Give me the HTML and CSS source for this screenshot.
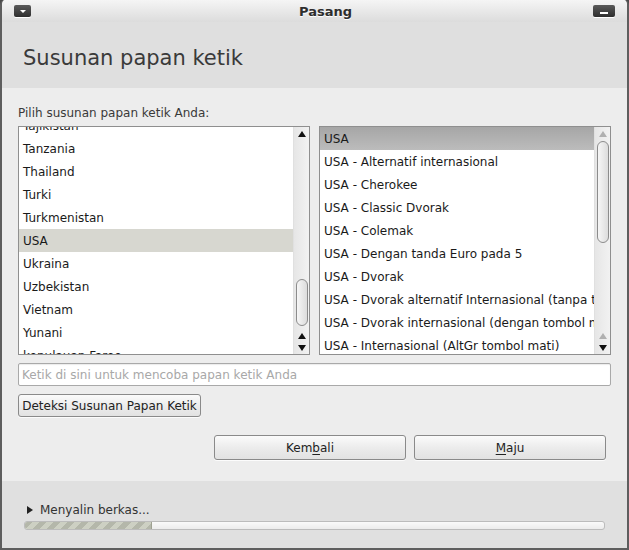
FILE: index.html
```html
<!DOCTYPE html>
<html lang="id">
<head>
<meta charset="utf-8">
<title>Pasang</title>
<link rel="stylesheet" href="styles.css">
</head>
<body>
<div class="window">
  <div class="titlebar">
    <span class="wbtn wbtn-menu"><span class="tri-down-white"></span></span>
    <span class="wtitle">Pasang</span>
    <span class="wbtn wbtn-min"><span class="minbar"></span></span>
  </div>
  <div class="header">
    <h1 class="page-title">Susunan papan ketik</h1>
  </div>
  <div class="content">
    <div class="label">Pilih susunan papan ketik Anda:</div>
    <div class="lists">
      <div class="listbox">
        <div class="rows rows-scrolled">
          <div class="row">Tajikistan</div>
          <div class="row">Tanzania</div>
          <div class="row">Thailand</div>
          <div class="row">Turki</div>
          <div class="row">Turkmenistan</div>
          <div class="row row-sel-light">USA</div>
          <div class="row">Ukraina</div>
          <div class="row">Uzbekistan</div>
          <div class="row">Vietnam</div>
          <div class="row">Yunani</div>
          <div class="row">kepulauan Faroe</div>
        </div>
        <div class="scrollbar">
          <div class="arrow"><span class="tri-up"></span></div>
          <div class="thumb thumb-left"></div>
          <div class="spacer"></div>
          <div class="arrow"><span class="tri-up"></span></div>
          <div class="arrow"><span class="tri-down"></span></div>
        </div>
      </div>
      <div class="listbox">
        <div class="rows">
          <div class="row row-sel-dark">USA</div>
          <div class="row">USA - Alternatif internasional</div>
          <div class="row">USA - Cherokee</div>
          <div class="row">USA - Classic Dvorak</div>
          <div class="row">USA - Colemak</div>
          <div class="row">USA - Dengan tanda Euro pada 5</div>
          <div class="row">USA - Dvorak</div>
          <div class="row">USA - Dvorak alternatif Internasional (tanpa tombol mati)</div>
          <div class="row">USA - Dvorak internasional (dengan tombol mati)</div>
          <div class="row">USA - Internasional (AltGr tombol mati)</div>
        </div>
        <div class="scrollbar">
          <div class="arrow"><span class="tri-up tri-dim"></span></div>
          <div class="thumb thumb-right"></div>
          <div class="spacer"></div>
          <div class="arrow"><span class="tri-up tri-dim"></span></div>
          <div class="arrow"><span class="tri-down"></span></div>
        </div>
      </div>
    </div>
    <div class="entry">Ketik di sini untuk mencoba papan ketik Anda</div>
    <div class="detect-row"><span class="btn btn-detect">Deteksi Susunan Papan Ketik</span></div>
    <div class="nav">
      <span class="btn btn-nav">Kem<u>b</u>ali</span>
      <span class="btn btn-nav"><u>M</u>aju</span>
    </div>
  </div>
  <div class="footer">
    <div class="expander"><span class="tri-right"></span><span>Menyalin berkas...</span></div>
    <div class="progress"><div class="progress-fill" style="width:22%"></div></div>
  </div>
</div>
</body>
</html>
```

FILE: styles.css
```css
* { box-sizing: border-box; }
html, body { margin: 0; padding: 0; }
body {
  width: 629px;
  height: 550px;
  overflow: hidden;
  background: #4a4a4a;
  font-family: "DejaVu Sans", "Liberation Sans", sans-serif;
  font-size: 12px;
  color: #1c1c1c;
}
.window {
  width: 629px;
  height: 550px;
  border-left: 2px solid #5e5e5e;
  border-right: 2px solid #5e5e5e;
  border-bottom: 2px solid #5e5e5e;
  border-radius: 5px 5px 0 0;
  background: #ededed;
  display: flex;
  flex-direction: column;
  overflow: hidden;
}
.titlebar {
  height: 22px;
  flex: none;
  background: linear-gradient(#f5f5f5, #dcdcdc);
  display: flex;
  align-items: center;
  padding: 0 12px 0 12px;
}
.wbtn {
  height: 12px;
  border-radius: 2px;
  background: linear-gradient(#5a5a5a, #2e2e2e);
  box-shadow: 0 1px 0 #fff;
  display: flex;
  align-items: center;
  justify-content: center;
  flex: none;
}
.wbtn-menu { width: 17px; }
.wbtn-min { width: 22px; }
.tri-down-white {
  width: 0; height: 0;
  border-left: 3px solid transparent;
  border-right: 3px solid transparent;
  border-top: 3px solid #fff;
}
.minbar { width: 8px; height: 2px; background: #fff; margin-top: 3px; }
.wtitle {
  flex: 1;
  text-align: center;
  font-weight: bold;
  font-size: 13px;
  color: #2e2e2e;
  padding-left: 27px;
  text-shadow: 0 1px 0 #fff;
}
.header {
  height: 66px;
  flex: none;
  background: #dfdfdf;
  display: flex;
  align-items: center;
  padding-left: 21px;
}
.page-title {
  margin: 0;
  font-weight: normal;
  font-size: 21px;
  color: #3a3a3a;
  padding-top: 5px;
}
.content {
  flex: 1;
  padding: 16px 16px 0 16px;
  display: flex;
  flex-direction: column;
}
.label {
  font-size: 12px;
  color: #3a3a3a;
  line-height: 17px;
  height: 17px;
  padding-top: 1px;
}
.lists {
  margin-top: 5px;
  display: grid;
  grid-template-columns: 292px 292px;
  column-gap: 9px;
  height: 229px;
}
.listbox {
  border: 1px solid #8f8f8f;
  background: #fff;
  display: flex;
  overflow: hidden;
}
.rows {
  flex: 1;
  overflow: hidden;
  min-width: 0;
}
.rows-scrolled .row:first-child { margin-top: -13px; }
.row {
  height: 23px;
  line-height: 23px;
  padding-top: 1px;
  padding-left: 4px;
  white-space: nowrap;
  overflow: hidden;
  color: #1a1a1a;
  font-size: 12px;
}
.row-sel-light { background: #d7d7d0; }
.row-sel-dark { background: linear-gradient(#a6a6a6, #bcbcbc); }
.scrollbar {
  width: 16px;
  flex: none;
  background: linear-gradient(90deg, #e6e6e6, #f2f2f2);
  border-left: 1px solid #e0e0e0;
  display: flex;
  flex-direction: column;
  align-items: center;
}
.arrow {
  height: 12px;
  width: 100%;
  display: flex;
  align-items: center;
  justify-content: center;
  flex: none;
}
.scrollbar .arrow:first-child { height: 13px; }
.tri-up {
  width: 0; height: 0;
  border-left: 4px solid transparent;
  border-right: 4px solid transparent;
  border-bottom: 6px solid #111;
}
.tri-down {
  width: 0; height: 0;
  border-left: 4px solid transparent;
  border-right: 4px solid transparent;
  border-top: 6px solid #111;
}
.tri-dim { border-bottom-color: #b0b0b0; }
.thumb {
  width: 12px;
  border: 1px solid #8c8c8c;
  border-radius: 7px;
  background: linear-gradient(90deg, #f6f6f6, #dcdcdc);
  flex: none;
}
.thumb-left { margin-top: 139px; height: 47px; }
.thumb-right { margin-top: 1px; height: 102px; }
.spacer { flex: 1; }
.entry {
  margin-top: 8px;
  height: 23px;
  border: 1px solid #a9a9a9;
  border-radius: 2px;
  background: #fff;
  box-shadow: inset 0 1px 1px rgba(0,0,0,0.08);
  color: #a8a8a8;
  line-height: 21px;
  padding-top: 1px;
  padding-left: 3px;
  font-size: 12px;
  white-space: nowrap;
  overflow: hidden;
}
.detect-row {
  margin-top: 8px;
  display: flex;
}
.btn {
  display: flex;
  align-items: center;
  justify-content: center;
  border: 1px solid #8a8a8a;
  border-radius: 3px;
  background: linear-gradient(#fbfbfb, #ececec 50%, #e2e2e2);
  color: #222;
  box-shadow: 0 1px 0 rgba(255,255,255,0.8);
  white-space: nowrap;
  font-size: 12px;
}
.btn u { text-decoration: underline; text-underline-offset: 2px; }
.btn-detect {
  height: 23px;
  width: 183px;
}
.nav {
  margin-top: 18px;
  display: flex;
  justify-content: flex-end;
  gap: 8px;
  padding-right: 5px;
}
.btn-nav {
  width: 192px;
  height: 25px;
}
.footer {
  height: 67px;
  flex: none;
  background: #e0e0e0;
  padding: 20px 22px 0 22px;
}
.expander {
  display: flex;
  align-items: center;
  gap: 6px;
  padding-left: 3px;
  height: 17px;
  color: #333;
  font-size: 12px;
}
.tri-right {
  width: 0; height: 0;
  border-top: 4px solid transparent;
  border-bottom: 4px solid transparent;
  border-left: 6px solid #222;
  margin-right: 1px;
}
.progress {
  margin-top: 3px;
  height: 9px;
  width: 581px;
  border: 1px solid #bcbcbc;
  border-radius: 3px;
  background: linear-gradient(#fafafa, #ececec);
  overflow: hidden;
}
.progress-fill {
  height: 100%;
  background: repeating-linear-gradient(135deg, #b4b7aa 0 5px, #cdd0c3 5px 10px);
  border-right: 1px solid #9ea191;
}
```
